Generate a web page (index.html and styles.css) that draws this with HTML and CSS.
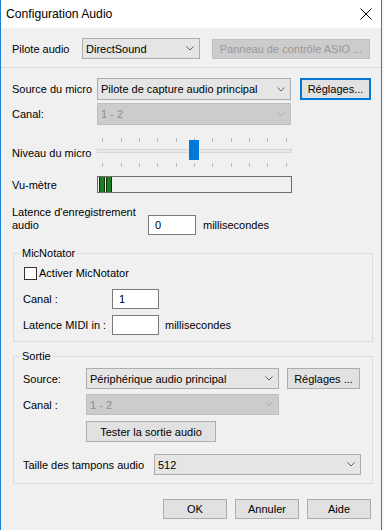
FILE: index.html
```html
<!DOCTYPE html>
<html lang="fr">
  <head>
    <meta charset="UTF-8" />
    <title>Configuration Audio</title>
    <link rel="stylesheet" href="styles.css">
  </head>
  <body>
    <div class="dialog">
      <div class="titlebar">
        <span class="title">Configuration Audio</span>
        <svg class="close" width="12" height="12" viewBox="0 0 12 12">
          <path d="M0.5 0.5 L11.5 11.5 M11.5 0.5 L0.5 11.5" stroke="#000" stroke-width="1" fill="none" />
        </svg>
      </div>

      <div class="content">
        <div class="row row-driver">
          <div class="lbl" style="width: 70px">Pilote audio</div>
          <div class="combo" style="width: 118px">
            <span>DirectSound</span>
            <svg class="chev" width="8" height="5" viewBox="0 0 8 5"><polyline points="0.5,0.5 4,4 7.5,0.5" /></svg>
          </div>
          <div class="btn disabled btn-asio">Panneau de contrôle ASIO ...</div>
        </div>
      </div>

      <div class="sep"></div>

      <div class="content">
        <div class="row row-source">
          <div class="lbl" style="width: 85px">Source du micro</div>
          <div class="combo" style="width: 194px">
            <span>Pilote de capture audio principal</span>
            <svg class="chev" width="8" height="5" viewBox="0 0 8 5"><polyline points="0.5,0.5 4,4 7.5,0.5" /></svg>
          </div>
          <div class="btn focused btn-settings">Réglages...</div>
        </div>

        <div class="row row-canal">
          <div class="lbl" style="width: 85px">Canal:</div>
          <div class="combo disabled" style="width: 194px">
            <span>1 - 2</span>
            <svg class="chev" width="8" height="5" viewBox="0 0 8 5"><polyline points="0.5,0.5 4,4 7.5,0.5" /></svg>
          </div>
        </div>

        <div class="row row-slider">
          <div class="lbl" style="width: 85px">Niveau du micro</div>
          <svg class="slider" width="195" height="30" viewBox="0 0 195 30">
            <g stroke="#b9b9b9" stroke-width="1">
              <path d="M5.5 0 V4 M24.5 0 V4 M42.5 0 V4 M60.5 0 V4 M79.5 0 V4 M97.5 0 V4 M115.5 0 V4 M134.5 0 V4 M152.5 0 V4 M170.5 0 V4 M189.5 0 V4" />
              <path d="M5.5 25 V29 M24.5 25 V29 M42.5 25 V29 M60.5 25 V29 M79.5 25 V29 M97.5 25 V29 M115.5 25 V29 M134.5 25 V29 M152.5 25 V29 M170.5 25 V29 M189.5 25 V29" />
            </g>
            <rect x="0.5" y="11.5" width="194" height="3" fill="#e7e7e7" stroke="#d6d6d6" />
            <rect x="92" y="2" width="10" height="20" fill="#0078d7" />
          </svg>
        </div>

        <div class="row row-meter">
          <div class="lbl" style="width: 85px">Vu-mètre</div>
          <div class="meter">
            <div class="bar"></div>
            <div class="bar"></div>
          </div>
        </div>

        <div class="row row-latency">
          <div class="lbl lbl-two">Latence d'enregistrement<br />audio</div>
          <div class="field latency-field" style="width: 48px">0</div>
          <div class="unit">millisecondes</div>
        </div>

        <div class="group group-mic">
          <div class="group-title">MicNotator</div>
          <div class="row row-check">
            <div class="checkbox"></div>
            <div class="check-lbl">Activer MicNotator</div>
          </div>
          <div class="row row-mic">
            <div class="lbl" style="width: 89px">Canal :</div>
            <div class="field" style="width: 47px">1</div>
          </div>
          <div class="row row-midi">
            <div class="lbl" style="width: 89px">Latence MIDI in :</div>
            <div class="field" style="width: 47px"></div>
            <div class="unit unit-midi">millisecondes</div>
          </div>
        </div>

        <div class="group group-out">
          <div class="group-title">Sortie</div>
          <div class="row row-out">
            <div class="lbl" style="width: 63px">Source:</div>
            <div class="combo" style="width: 193px">
              <span>Périphérique audio principal</span>
              <svg class="chev" width="8" height="5" viewBox="0 0 8 5"><polyline points="0.5,0.5 4,4 7.5,0.5" /></svg>
            </div>
            <div class="btn btn-out-settings">Réglages ...</div>
          </div>
          <div class="row row-out-canal">
            <div class="lbl" style="width: 63px">Canal :</div>
            <div class="combo disabled" style="width: 193px">
              <span>1 - 2</span>
              <svg class="chev" width="8" height="5" viewBox="0 0 8 5"><polyline points="0.5,0.5 4,4 7.5,0.5" /></svg>
            </div>
          </div>
          <div class="row row-test">
            <div class="btn btn-test">Tester la sortie audio</div>
          </div>
          <div class="row row-buffer">
            <div class="lbl" style="width: 131px">Taille des tampons audio</div>
            <div class="combo" style="width: 207px">
              <span>512</span>
              <svg class="chev" width="8" height="5" viewBox="0 0 8 5"><polyline points="0.5,0.5 4,4 7.5,0.5" /></svg>
            </div>
          </div>
        </div>

        <div class="row actions">
          <div class="btn btn-action">OK</div>
          <div class="btn btn-action">Annuler</div>
          <div class="btn btn-action">Aide</div>
        </div>
      </div>
    </div>
  </body>
</html>
```

FILE: styles.css
```css
body {
  margin: 0;
  background: #f7f7f7;
  font-family: "Liberation Sans", Arial, sans-serif;
  font-size: 11px;
  color: #000;
}

.dialog {
  width: 380px;
  height: 530px;
  border-left: 1px solid #1c7fd6;
  border-right: 1px solid #1c7fd6;
  background: #f0f0f0;
  overflow: hidden;
}

.titlebar {
  height: 28px;
  background: #fff;
  display: flex;
  align-items: center;
  justify-content: space-between;
  padding: 0 9px 0 5px;
}

.title {
  font-size: 12.2px;
}

.content {
  padding: 0 10px 0 11px;
}

.sep {
  height: 1px;
  margin-top: 8px;
  background: #dcdcdc;
}

.row {
  display: flex;
  align-items: center;
}

.lbl {
  flex: none;
  white-space: nowrap;
}

/* controls */

.combo {
  box-sizing: border-box;
  height: 100%;
  display: flex;
  align-items: center;
  justify-content: space-between;
  padding: 0 5px 0 3px;
  border: 1px solid #adadad;
  background: #e5e5e5;
  white-space: nowrap;
}

.combo .chev polyline {
  fill: none;
  stroke: #606060;
  stroke-width: 1;
}

.combo.disabled {
  background: #cccccc;
  border-color: #bfbfbf;
  color: #8d8d8d;
}

.combo.disabled .chev polyline {
  stroke: #b0b0b0;
}

.btn {
  box-sizing: border-box;
  height: 100%;
  display: flex;
  align-items: center;
  justify-content: center;
  border: 1px solid #adadad;
  background: #e1e1e1;
  white-space: nowrap;
}

.btn.disabled {
  background: #cccccc;
  border-color: #bfbfbf;
  color: #999999;
}

.btn.focused {
  border-color: #0078d7;
  box-shadow: inset 0 0 0 1px #0078d7;
}

.field {
  box-sizing: border-box;
  height: 20px;
  border: 1px solid #7a7a7a;
  background: #fff;
  padding-left: 6px;
  line-height: 18px;
}

.unit {
  white-space: nowrap;
}

/* rows of the top part */

.row-driver {
  margin-top: 10px;
  height: 21px;
}

.btn-asio {
  width: 158px;
  margin-left: 12px;
  height: 20px;
}

.row-source {
  margin-top: 10px;
  height: 22px;
}

.btn-settings {
  width: 71px;
  margin-left: 9px;
}

.row-canal {
  margin-top: 3px;
  height: 22px;
}

.row-slider {
  margin-top: 13px;
  height: 30px;
}

.slider {
  display: block;
}

.row-meter {
  margin-top: 8px;
  height: 17px;
}

.meter {
  box-sizing: border-box;
  width: 195px;
  height: 17px;
  border: 1px solid #6d6d6d;
  display: flex;
  gap: 1px;
  padding: 0 1px;
}

.bar {
  width: 4px;
  background: #1f7f1f;
  border-left: 1px solid #0b300b;
  border-right: 1px solid #0b300b;
}

.row-latency {
  margin-top: 13px;
  align-items: flex-start;
}

.lbl-two {
  width: 136px;
  line-height: 13px;
}

.latency-field {
  margin-top: 9px;
}

.row-latency .unit {
  margin-left: 7px;
  margin-top: 9px;
  line-height: 20px;
}

/* group boxes */

.group {
  width: 360px;
  box-sizing: border-box;
  margin-left: 1px;
  border: 1px solid #dcdcdc;
  padding: 0 9px;
}

.group-title {
  width: fit-content;
  margin: -8px 0 0 -3px;
  padding: 0 2px;
  line-height: 14px;
  background: #f0f0f0;
}

.group-mic {
  margin-top: 18px;
  padding-bottom: 6px;
}

.row-check {
  margin-top: 5px;
  height: 16px;
}

.checkbox {
  box-sizing: border-box;
  width: 13px;
  height: 13px;
  margin-left: 1px;
  border: 1px solid #333;
  background: #fff;
}

.check-lbl {
  margin-left: 2px;
}

.row-mic {
  margin-top: 8px;
  height: 20px;
}

.row-midi {
  margin-top: 6px;
  height: 20px;
}

.unit-midi {
  margin-left: 6px;
}

.group-out {
  margin-top: 14px;
  padding-bottom: 8px;
}

.row-out {
  margin-top: 5px;
  height: 21px;
}

.btn-out-settings {
  width: 73px;
  margin-left: 8px;
}

.row-out-canal {
  margin-top: 5px;
  height: 21px;
}

.row-test {
  margin-top: 6px;
  height: 21px;
}

.btn-test {
  width: 130px;
  margin-left: 63px;
}

.row-buffer {
  margin-top: 12px;
  height: 21px;
}

.actions {
  margin-top: 15px;
  height: 20px;
  justify-content: flex-end;
  gap: 8px;
}

.btn-action {
  width: 64px;
}
```
